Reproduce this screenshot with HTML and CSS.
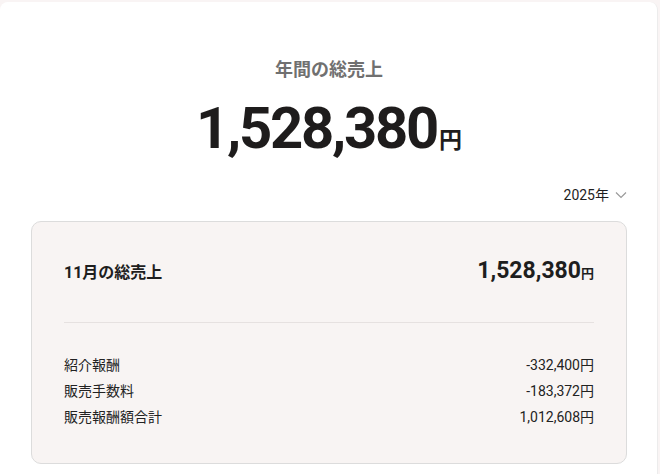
FILE: index.html
```html
<!DOCTYPE html>
<html>
<head>
    <link rel="stylesheet" href="styles.css">
</head>
<body>
    <div class="panel">
        <div class="summary">
            <div class="summary-title">年間の総売上</div>
            <div class="summary-total">1,528,380<span class="yen">円</span></div>
        </div>

        <div class="year-row">
            <div class="year-select">
                2025年
                <svg width="12" height="8" viewBox="0 0 12 8"><path d="M1 1.5 L6 6.5 L11 1.5" fill="none" stroke="#9a9a9a" stroke-width="1.2"/></svg>
            </div>
        </div>

        <div class="month-card">
            <div class="month-head">
                <div class="month-label">11月の総売上</div>
                <div class="month-total">1,528,380<span class="yen-sm">円</span></div>
            </div>
            <div class="divider"></div>
            <div class="rows">
                <div class="row"><span>紹介報酬</span><span>-332,400円</span></div>
                <div class="row"><span>販売手数料</span><span>-183,372円</span></div>
                <div class="row"><span>販売報酬額合計</span><span>1,012,608円</span></div>
            </div>
        </div>
    </div>
</body>
</html>
```

FILE: styles.css
```css
body {
    margin: 0;
    padding: 0;
    background-color: #f9f4f4;
    color: #1e1e1e;
    font-family: Roboto, "Noto Sans CJK JP", sans-serif;
}
.panel {
    margin-top: 2px;
    margin-right: 2px;
    height: 472px;
    background-color: #ffffff;
    border-right: 1px solid #ececec;
    border-radius: 8px 8px 0 0;
    padding: 0 30px 0 31px;
    box-sizing: border-box;
}
.summary {
    text-align: center;
    padding-top: 56px;
}
.summary-title {
    font-size: 18px;
    font-weight: bold;
    color: #707070;
    line-height: 24px;
}
.summary-total {
    margin-top: 10px;
    font-size: 58px;
    font-weight: bold;
    line-height: 72px;
    letter-spacing: -2.3px;
    color: #1e1c1c;
}
.yen {
    font-size: 23px;
    letter-spacing: 0;
    margin-left: 2px;
}
.year-row {
    display: flex;
    justify-content: flex-end;
    margin-top: 8px;
}
.year-select {
    display: flex;
    align-items: center;
    gap: 6px;
    font-size: 14px;
    line-height: 20px;
    color: #1e1e1e;
}
.month-card {
    margin-top: 16px;
    background-color: #f8f4f3;
    border: 1px solid #dcdcdc;
    border-radius: 10px;
    padding: 0 32px 0 32px;
    height: 243px;
    box-sizing: border-box;
}
.month-head {
    display: flex;
    justify-content: space-between;
    align-items: center;
    height: 100px;
    padding-bottom: 3px;
    box-sizing: border-box;
}
.month-label {
    font-size: 16px;
    font-weight: bold;
}
.month-total {
    font-size: 23px;
    font-weight: bold;
}
.yen-sm {
    font-size: 13px;
}
.divider {
    height: 1px;
    background-color: #e6e1e0;
}
.rows {
    padding-top: 29px;
}
.row {
    display: flex;
    justify-content: space-between;
    font-size: 14px;
    line-height: 26px;
    color: #222;
}
```
